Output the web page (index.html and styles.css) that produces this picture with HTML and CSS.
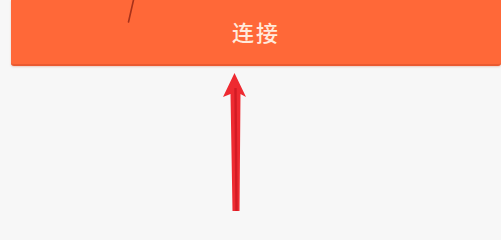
FILE: index.html
```html
<!DOCTYPE html>
<html lang="zh">
<head>
<meta charset="utf-8">
<link rel="stylesheet" href="styles.css">
</head>
<body>
<div class="page">
  <div class="bar">
    <button class="connect">连接</button>
  </div>
  <svg class="annot" width="501" height="211" viewBox="0 0 501 211" xmlns="http://www.w3.org/2000/svg">
    <path d="M133.5 0 L128.5 22" stroke="#a8321a" stroke-width="1.6" stroke-linecap="round" fill="none"/>
    <path d="M234.5 73 L246 97 L240.5 94 L239.5 211 L232.5 211 L230.5 94 L223 97 Z" fill="#ee2a31"/>
    <path d="M235.5 88 L236.5 211" stroke="#c8161f" stroke-width="2.4" fill="none" opacity="0.7"/>
  </svg>
</div>
</body>
</html>
```
FILE: styles.css
```css
html, body {
  margin: 0;
  padding: 0;
}
body {
  background: #f7f7f7;
  width: 501px;
  height: 211px;
  overflow: hidden;
  font-family: "Noto Sans CJK SC", "Noto Sans", sans-serif;
}
.page {
  position: relative;
  width: 501px;
  height: 211px;
}
.bar {
  padding-left: 11px;
}
.connect {
  display: flex;
  align-items: center;
  justify-content: center;
  width: 490px;
  height: 66px;
  margin: 0;
  padding: 0 0 2px 0;
  border: none;
  border-bottom: 2px solid #ea5a30;
  border-radius: 0 0 3px 3px;
  background: #ff6838;
  color: #ffeadc;
  font-family: "Noto Sans CJK SC", "Noto Sans", sans-serif;
  font-size: 22px;
  font-weight: 500;
  letter-spacing: 2px;
  box-shadow: 0 1px 2px rgba(200, 80, 40, 0.25);
}
.annot {
  position: absolute;
  left: 0;
  top: 0;
  pointer-events: none;
}
```
